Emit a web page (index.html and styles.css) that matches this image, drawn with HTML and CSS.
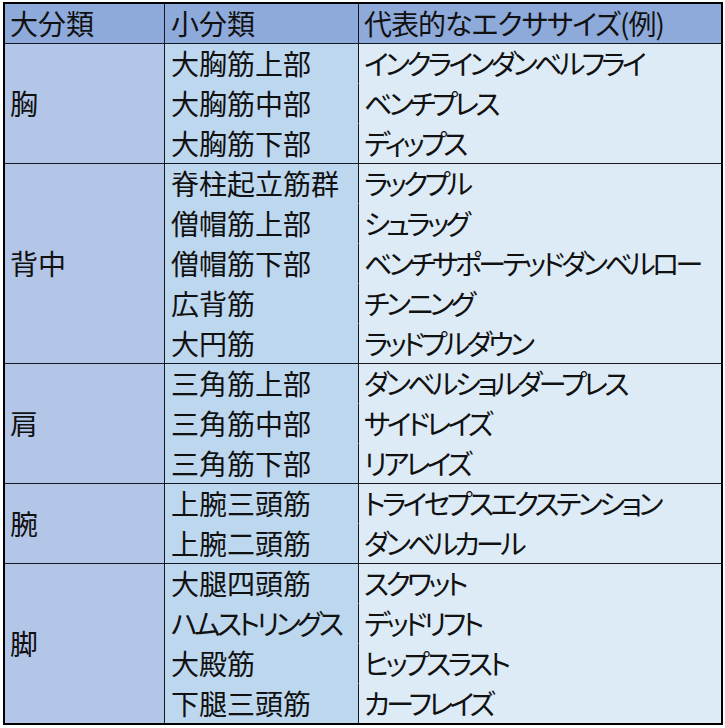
FILE: index.html
```html
<!DOCTYPE html>
<html lang="ja">
<head>
<meta charset="utf-8">
<link rel="stylesheet" href="styles.css">
</head>
<body>
<table class="muscles">
  <thead>
    <tr><th class="c1">大分類</th><th class="c2">小分類</th><th class="c3 head-mixed">代表的なエクササイズ(例)</th></tr>
  </thead>
  <tbody>
    <tr><td class="c1" rowspan="3">胸</td><td class="c2">大胸筋上部</td><td class="c3">インクラインダンベルフライ</td></tr>
    <tr><td class="c2">大胸筋中部</td><td class="c3">ベンチプレス</td></tr>
    <tr class="grp-end"><td class="c2">大胸筋下部</td><td class="c3">ディップス</td></tr>

    <tr><td class="c1" rowspan="5">背中</td><td class="c2">脊柱起立筋群</td><td class="c3">ラックプル</td></tr>
    <tr><td class="c2">僧帽筋上部</td><td class="c3">シュラッグ</td></tr>
    <tr><td class="c2">僧帽筋下部</td><td class="c3">ベンチサポーテッドダンベルロー</td></tr>
    <tr><td class="c2">広背筋</td><td class="c3">チンニング</td></tr>
    <tr class="grp-end"><td class="c2">大円筋</td><td class="c3">ラッドプルダウン</td></tr>

    <tr><td class="c1" rowspan="3">肩</td><td class="c2">三角筋上部</td><td class="c3">ダンベルショルダープレス</td></tr>
    <tr><td class="c2">三角筋中部</td><td class="c3">サイドレイズ</td></tr>
    <tr class="grp-end"><td class="c2">三角筋下部</td><td class="c3">リアレイズ</td></tr>

    <tr><td class="c1" rowspan="2">腕</td><td class="c2">上腕三頭筋</td><td class="c3">トライセプスエクステンション</td></tr>
    <tr class="grp-end"><td class="c2">上腕二頭筋</td><td class="c3">ダンベルカール</td></tr>

    <tr><td class="c1 last" rowspan="4">脚</td><td class="c2">大腿四頭筋</td><td class="c3">スクワット</td></tr>
    <tr><td class="c2 kana">ハムストリングス</td><td class="c3">デッドリフト</td></tr>
    <tr><td class="c2">大殿筋</td><td class="c3">ヒップスラスト</td></tr>
    <tr class="last-row"><td class="c2">下腿三頭筋</td><td class="c3">カーフレイズ</td></tr>
  </tbody>
</table>
</body>
</html>
```

FILE: styles.css
```css
html, body {
  margin: 0;
  padding: 0;
  background: #ffffff;
}

body {
  padding: 2px 0 0 3px;
  font-family: "Noto Sans CJK JP", "Noto Sans", sans-serif;
  color: #111111;
}

.muscles {
  border-collapse: separate;
  border-spacing: 0;
  border: 2px solid #000000;
  table-layout: fixed;
  width: 720px;
}

.muscles th,
.muscles td {
  height: 39px;
  padding: 0 0 0 5px;
  font-size: 28px;
  font-weight: 400;
  line-height: 39px;
  text-align: left;
  white-space: nowrap;
  overflow: hidden;
  font-feature-settings: "palt";
  border-right: 1px solid #161820;
  border-bottom: 1px solid #161820;
  vertical-align: middle;
}

.muscles .c1 { width: 154px; }
.muscles .c2 { width: 187px; padding-left: 6px; }
.muscles .c3 { width: 357px; border-right: 0; }

.muscles td.c3,
.muscles td.kana {
  letter-spacing: -3.6px;
}

.muscles th.head-mixed {
  letter-spacing: -1px;
}

.muscles th { background: #8eaadb; }
.muscles td.c1 { background: #b4c6e7; }
.muscles td.c2 { background: #bdd7ee; }
.muscles td.c3 { background: #ddebf7; }

.muscles tbody tr:not(.grp-end):not(.last-row) td.c2 {
  border-bottom: 1px solid #bdd7ee;
}

.muscles tbody tr:not(.grp-end):not(.last-row) td.c3 {
  border-bottom: 1px solid #ddebf7;
}

.muscles td.c1[rowspan] { border-bottom: 1px solid #161820; }
.muscles tbody tr.last-row td,
.muscles td.c1.last { border-bottom: 0; }
```
